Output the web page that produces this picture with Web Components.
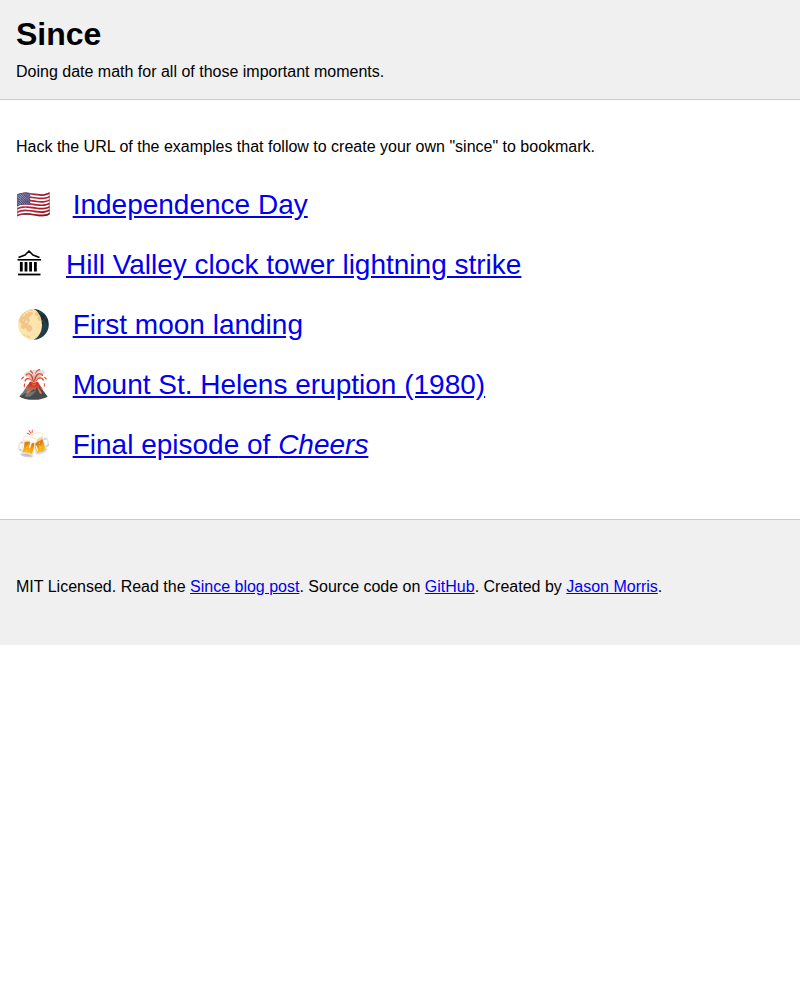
<!DOCTYPE html>
<html><head><meta charset="utf-8"><title>Since</title>
<style>html,body{margin:0;padding:0;background:#fff;font-family:"Liberation Sans",Arial,sans-serif;color:#000}</style>
</head><body>
<since-header></since-header>
<since-main></since-main>
<since-footer></since-footer>
<script>
class E extends HTMLElement{constructor(h){super();this.attachShadow({mode:'open'}).innerHTML=h}}
customElements.define('since-header',class extends E{constructor(){super(`<style>:host{display:block;background:#f0f0f0;border-bottom:1px solid #ccc;padding:16px 16px 18px}
h1{margin:0 0 10px;font-size:32px;line-height:37px}p{margin:0;font-size:16px;line-height:18px}</style>
<h1>Since</h1><p>Doing date math for all of those important moments.</p>`)}});
customElements.define('since-item',class extends E{constructor(){super(`<style>:host{display:block;font-size:28px;line-height:32px;margin:0 0 28px;height:32px}a{color:#00e}</style>
<slot name="emoji"></slot> <a href="#"><slot></slot></a>`)}});
customElements.define('since-main',class extends E{constructor(){super(`<style>:host{display:block;padding:0 16px 30px}p{margin:38px 0 33px;font-size:16px;line-height:18px}
.e{display:inline-block;margin-right:14px;font-family:"Noto Color Emoji","Liberation Sans",sans-serif;line-height:0}
svg{display:inline-block;vertical-align:top;margin-right:14px}</style>
<p>Hack the URL of the examples that follow to create your own "since" to bookmark.</p>
<since-item><span slot="emoji" class="e">🇺🇸</span>Independence Day</since-item>
<since-item><svg slot="emoji" width="28.2" height="32" viewBox="0 0 28.2 32" fill="none" stroke="#000" role="img" aria-label="Classical building">
<path d="M2.5 8.5 L9 6 L13 2 L17 6 L23.5 8.5" stroke-width="1.6"/>
<path d="M1.5 10.8 H25" stroke-width="1.6"/>
<path d="M5.3 13 V22.6 M10 13 V22.6 M14.6 13 V22.6 M19.4 13 V22.6" stroke-width="2.8"/>
<path d="M2 25.5 H24.5" stroke-width="1.8"/></svg>Hill Valley clock tower lightning strike</since-item>
<since-item><span slot="emoji" class="e">🌖</span>First moon landing</since-item>
<since-item><span slot="emoji" class="e">🌋</span>Mount St. Helens eruption (1980)</since-item>
<since-item><span slot="emoji" class="e">🍻</span>Final episode of <em>Cheers</em></since-item>`)}});
customElements.define('since-footer',class extends E{constructor(){super(`<style>:host{display:block;background:#f0f0f0;border-top:1px solid #ccc;padding:58px 16px 49px;font-size:16px;line-height:18px}a{color:#00e}</style>
MIT Licensed. Read the <a href="#">Since blog post</a>. Source code on <a href="#">GitHub</a>. Created by <a href="#">Jason Morris</a>.`)}});
</script></body></html>
